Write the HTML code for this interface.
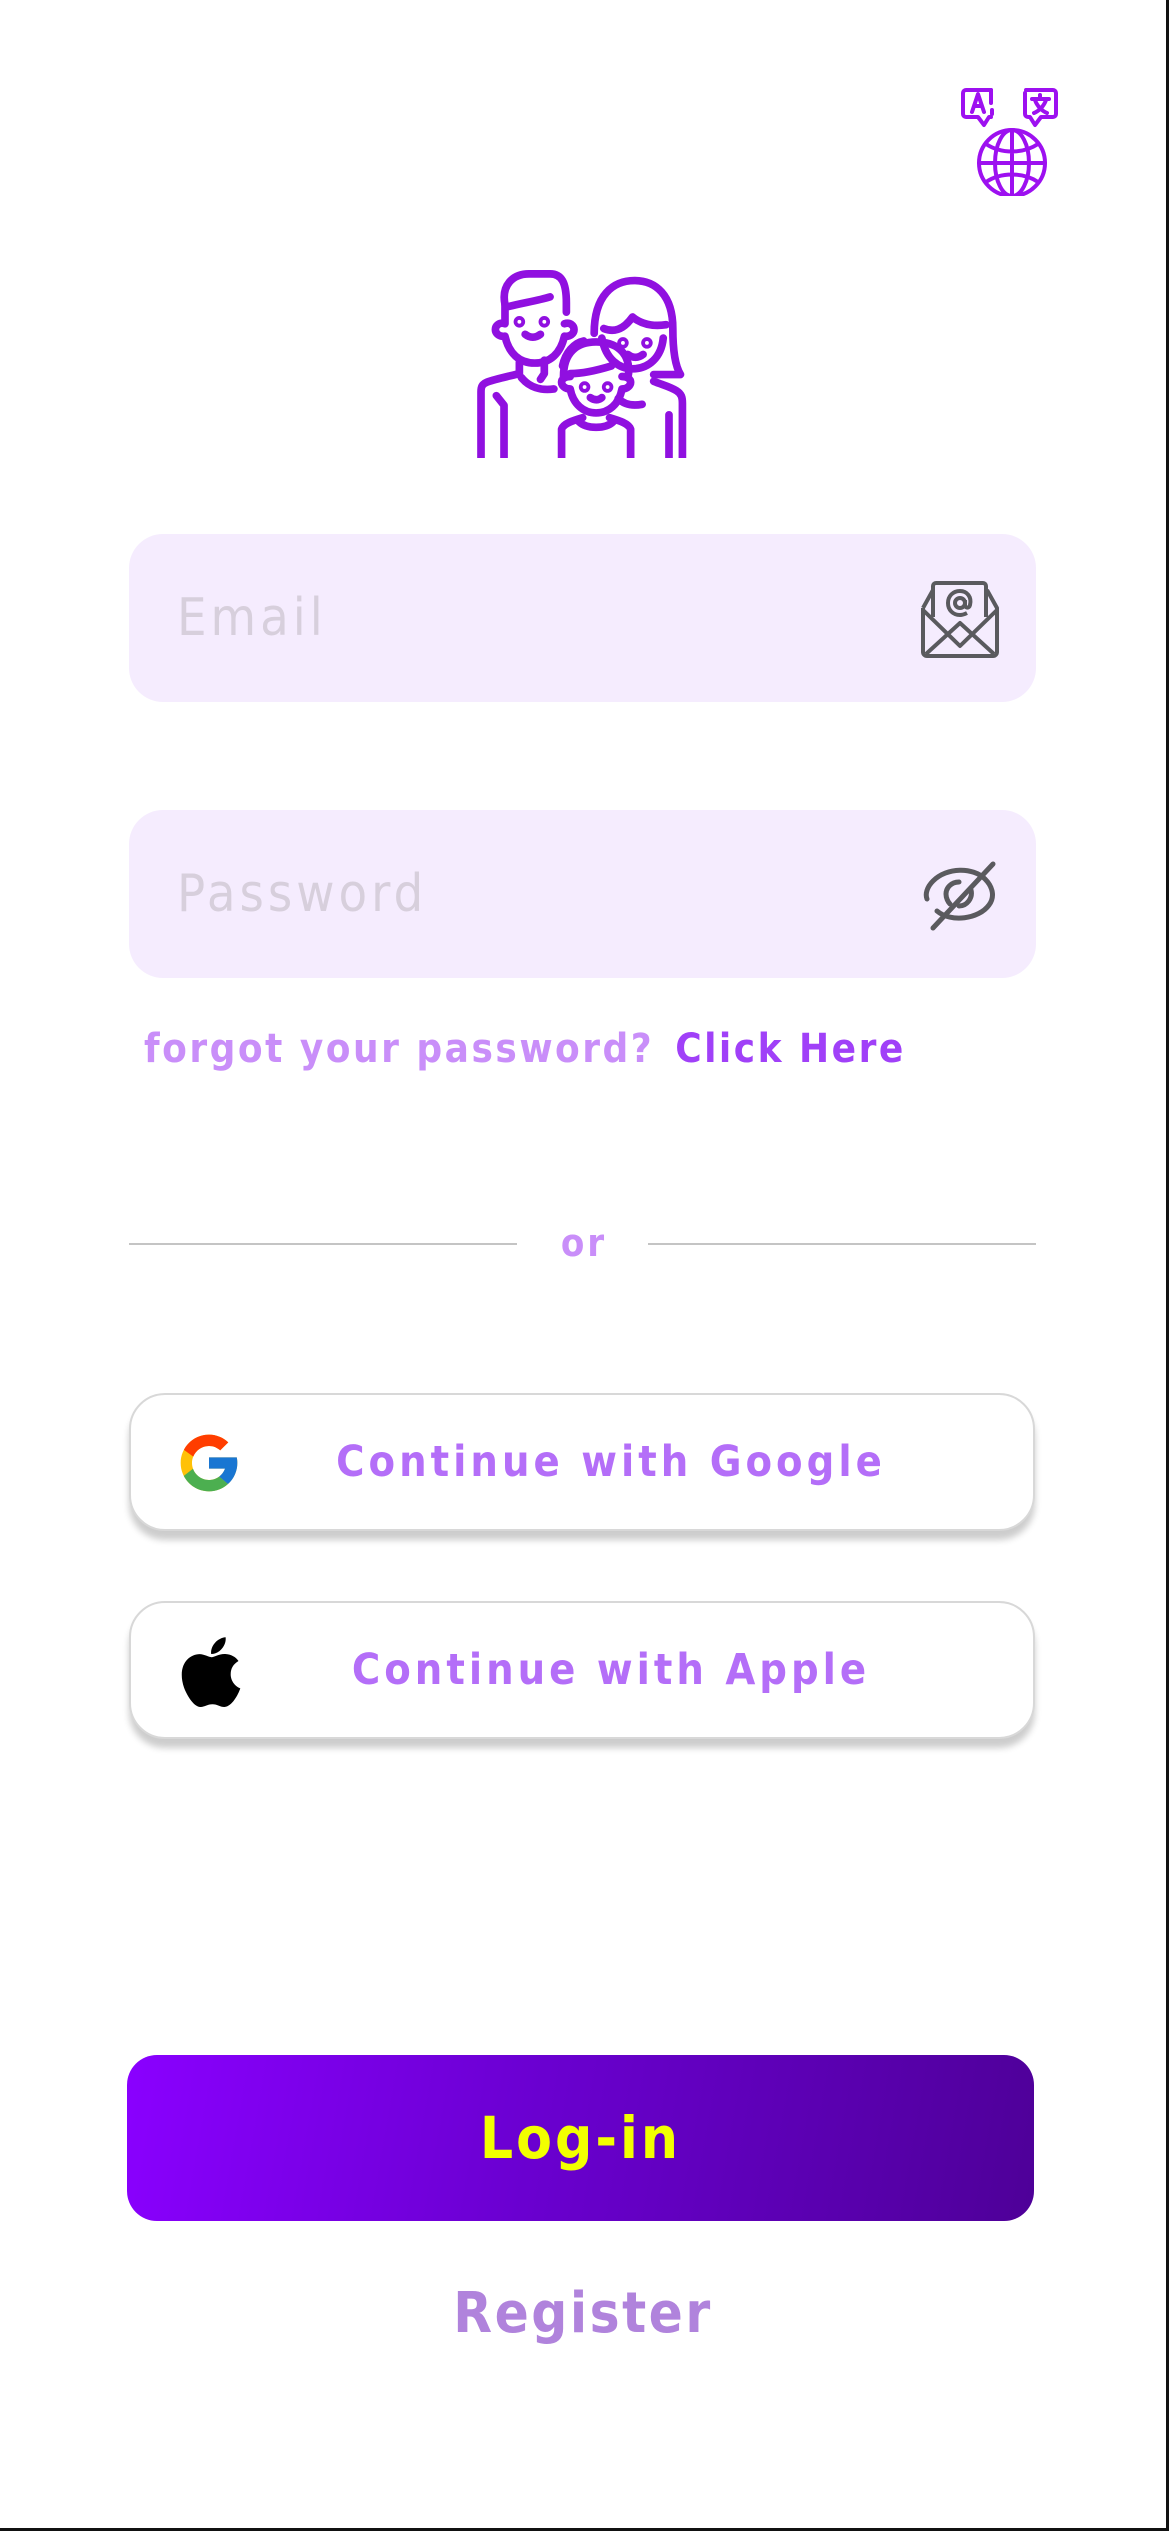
<!DOCTYPE html>
<html><head><meta charset="utf-8"><style>
html,body{margin:0;padding:0;}
body{width:1170px;height:2532px;position:relative;background:#fff;overflow:hidden;font-family:"DejaVu Sans Condensed","DejaVu Sans","Liberation Sans",sans-serif;}
.frame{position:absolute;left:0;top:0;width:1166px;height:2528px;border-right:3px solid #111;border-bottom:3px solid #111;}
.abs{position:absolute;}
.field{position:absolute;left:129px;width:907px;height:168px;background:#f5ecfe;border-radius:34px;}
.ph{position:absolute;left:48px;top:0;line-height:168px;font-size:52px;color:#d7cfdc;letter-spacing:4px;}
.btn{position:absolute;left:129px;width:902px;height:134px;border:2px solid #d8d8d8;border-radius:36px;background:#fff;box-shadow:0 9px 7px rgba(0,0,0,0.2);}
.btxt{position:absolute;left:0;right:0;text-align:center;line-height:134px;font-size:43px;font-weight:bold;color:#b46ef8;letter-spacing:4px;}
</style></head><body>
<div class="frame"></div>

<svg class="abs" style="left:955px;top:80px" width="116" height="116" viewBox="0 0 116 116" fill="none" stroke="#9d10f0" stroke-width="4" stroke-linecap="round" stroke-linejoin="round">
  <path d="M36 10H11a3 3 0 0 0-3 3v21a3 3 0 0 0 3 3h12l6 8l5-8h2"/>
  <path d="M36 10v13M37 30v4"/>
  <path d="M17 32l6-18l6 18M19.5 26h7"/>
  <path d="M71 10h27a3 3 0 0 1 3 3v21a3 3 0 0 1-3 3H86l-6 8l-5-8h-2a3 3 0 0 1-3-3V13"/>
  <path d="M77 19h17M85 15v4M80 20c2 6 7 11 12 13M91 20c-2 6-7 11-12 13"/>
  <circle cx="57" cy="83" r="33"/>
  <ellipse cx="57" cy="83" rx="17" ry="33"/>
  <path d="M57 50v66M24 83h66M31 64c15 10 37 10 52 0M31 102c15-10 37-10 52 0"/>
</svg>

<svg class="abs" style="left:450px;top:247px" width="250" height="211" viewBox="0 0 260 220" fill="none" stroke="#9010e0" stroke-width="8" stroke-linecap="round" stroke-linejoin="round">
  <path d="M57 60c-4-20 8-32 25-32h22c12 0 17 9 17 30v10"/>
  <path d="M57 60v20c-6-2-10 2-10 6s4 8 10 7c4 18 15 28 31 28s27-10 31-28c6 1 10-3 10-7s-4-8-10-6"/>
  <path d="M61 62c16-4 30-6 43-10"/>
  <circle cx="72" cy="78" r="2"/><circle cx="98" cy="78" r="2"/>
  <path d="M78 91c5 4 11 4 16 0"/>
  <path d="M72 120v12c-12 3-26 6-34 9c-5 2-6 5-6 10v72"/>
  <path d="M98 118v14l-4 6"/>
  <path d="M48 155l8 10v55"/>
  <path d="M74 136c8 10 20 14 34 12"/>
  <path d="M150 90c0-40 20-55 42-55s40 15 40 50c0 25 3 40 8 48h-28"/>
  <path d="M160 85c10 4 20 2 30-12c10 8 22 10 35 8"/>
  <path d="M158 95c4 22 18 32 32 32c17 0 30-12 32-32"/>
  <circle cx="180" cy="100" r="2"/><circle cx="205" cy="100" r="2"/>
  <path d="M185 112c5 4 11 4 16 0"/>
  <path d="M212 140c10 4 18 6 24 10c5 3 6 7 6 13v57"/>
  <path d="M228 175v45"/>
  <path d="M175 158c6 6 14 8 25 6"/>
  <path d="M118 135c0-25 14-36 34-36s34 10 34 30c0 2 0 4-1 6"/>
  <path d="M117 124c3-14 12-24 22-26"/>
  <path d="M125 132c15 0 30-4 43-8"/>
  <path d="M125 135c-6 0-9 3-9 6s3 7 9 7c3 16 14 25 27 25s24-9 27-25c6 0 9-4 9-7s-3-6-9-6"/>
  <circle cx="140" cy="146" r="2"/><circle cx="164" cy="146" r="2"/>
  <path d="M146 157c4 3 9 3 12 0"/>
  <path d="M138 178c-10 3-20 6-22 12v30M166 178c10 3 20 6 22 12v30"/>
  <path d="M134 182c8 8 28 8 36 0"/>
</svg>

<div class="field" style="top:534px"><div class="ph">Email</div>
  <svg class="abs" style="left:790px;top:46px" width="82" height="80" viewBox="0 0 82 80" fill="none" stroke="#5a5a5e" stroke-width="4" stroke-linejoin="round">
    <path d="M4 28v44a4 4 0 0 0 4 4h66a4 4 0 0 0 4-4V28L68 10"/>
    <path d="M4 28l10-18"/>
    <path d="M14 37V6a3 3 0 0 1 3-3h47a3 3 0 0 1 3 3v31"/>
    <path d="M4 30l37 36l37-36"/>
    <path d="M7 74l34-31l34 31"/>
    <circle cx="41" cy="23" r="5"/>
    <path d="M46 20v5c0 3 4 4 5 0c2-8-3-14-10-14c-7 0-12 5-12 12s5 12 12 12c3 0 5-1 7-2"/>
  </svg>
</div>

<div class="field" style="top:810px"><div class="ph">Password</div>
  <svg class="abs" style="left:790px;top:44px" width="80" height="80" viewBox="0 0 80 80" fill="none" stroke="#5a5a5e" stroke-width="5" stroke-linecap="round">
    <path d="M8 45c-2-5 0-12 6-18c14-14 40-14 52-2c8 8 10 18 4 26c-10 14-38 18-52 6"/>
    <path d="M40 28c-8 0-13 6-13 12c0 4 2 8 4 10M52 36c2 8-4 16-12 16"/>
    <path d="M74 10L14 74"/>
  </svg>
</div>

<div class="abs" style="left:144px;top:1022px;font-size:40px;line-height:54px;font-weight:bold;letter-spacing:2.5px;color:#c98ef9;white-space:nowrap">forgot your password? <span style="color:#a040f8;margin-left:6px">Click Here</span></div>

<div class="abs" style="left:129px;top:1243px;width:388px;height:2px;background:#c4c4c4"></div>
<div class="abs" style="left:648px;top:1243px;width:388px;height:2px;background:#c4c4c4"></div>
<div class="abs" style="left:530px;top:1218px;width:108px;text-align:center;font-size:38px;line-height:50px;font-weight:bold;color:#c98ef9;letter-spacing:3px">or</div>

<div class="btn" style="top:1393px">
  <svg class="abs" style="left:44px;top:34px" width="68" height="68" viewBox="0 0 48 48">
    <path fill="#FFC107" d="M43.6 20H42V20H24v8h11.3C33.7 32.7 29.2 36 24 36c-6.6 0-12-5.4-12-12s5.4-12 12-12c3.1 0 5.8 1.2 7.9 3.1l5.7-5.7C34 6.1 29.3 4 24 4 13 4 4 13 4 24s9 20 20 20 20-9 20-20c0-1.3-.1-2.6-.4-4z"/>
    <path fill="#FF3D00" d="M6.3 14.7l6.6 4.8C14.7 15.1 19 12 24 12c3.1 0 5.8 1.2 7.9 3.1l5.7-5.7C34 6.1 29.3 4 24 4 16.3 4 9.7 8.3 6.3 14.7z"/>
    <path fill="#4CAF50" d="M24 44c5.2 0 9.9-2 13.4-5.2l-6.2-5.2C29.2 35.1 26.7 36 24 36c-5.2 0-9.6-3.3-11.3-7.9l-6.5 5C9.5 39.6 16.2 44 24 44z"/>
    <path fill="#1976D2" d="M43.6 20H24v8h11.3c-.8 2.2-2.2 4.2-4.1 5.6l6.2 5.2C37 39.2 44 34 44 24c0-1.3-.1-2.6-.4-4z"/>
  </svg>
  <div class="btxt" style="padding-left:58px">Continue with Google</div>
</div>

<div class="btn" style="top:1601px">
  <svg class="abs" style="left:50px;top:34px" width="60" height="70" viewBox="0 0 384 450">
    <path fill="#000" d="M318.7 268.7c-.2-36.7 16.4-64.4 50-84.8-18.8-26.9-47.2-41.7-84.7-44.6-35.5-2.8-74.3 20.7-88.5 20.7-15 0-49.4-19.7-76.4-19.7C63.3 141.2 4 184.8 4 273.5q0 39.3 14.4 81.2c12.8 36.7 59 126.7 107.2 125.2 25.2-.6 43-17.9 75.8-17.9 31.8 0 48.3 17.9 76.4 17.9 48.6-.7 90.4-82.5 102.6-119.3-65.2-30.7-61.7-90-61.7-91.9zm-56.6-164.2c27.3-32.4 24.8-61.9 24-72.5-24.1 1.4-52 16.4-67.9 34.9-17.5 19.8-27.8 44.3-25.6 71.9 26.1 2 49.9-11.4 69.5-34.3z" transform="translate(0,-30)"/>
  </svg>
  <div class="btxt" style="padding-left:58px">Continue with Apple</div>
</div>

<div class="abs" style="left:127px;top:2055px;width:907px;height:166px;border-radius:30px;background:linear-gradient(100deg,#8a00ff 0%,#6a00d0 45%,#4e0098 100%);text-align:center;line-height:166px;font-size:58px;font-weight:bold;color:#f2ff00;letter-spacing:3px">Log-in</div>

<div class="abs" style="left:0;width:1166px;top:2276px;text-align:center;font-size:56px;line-height:76px;font-weight:bold;color:#b083dc;letter-spacing:2.5px">Register</div>
</body></html>
